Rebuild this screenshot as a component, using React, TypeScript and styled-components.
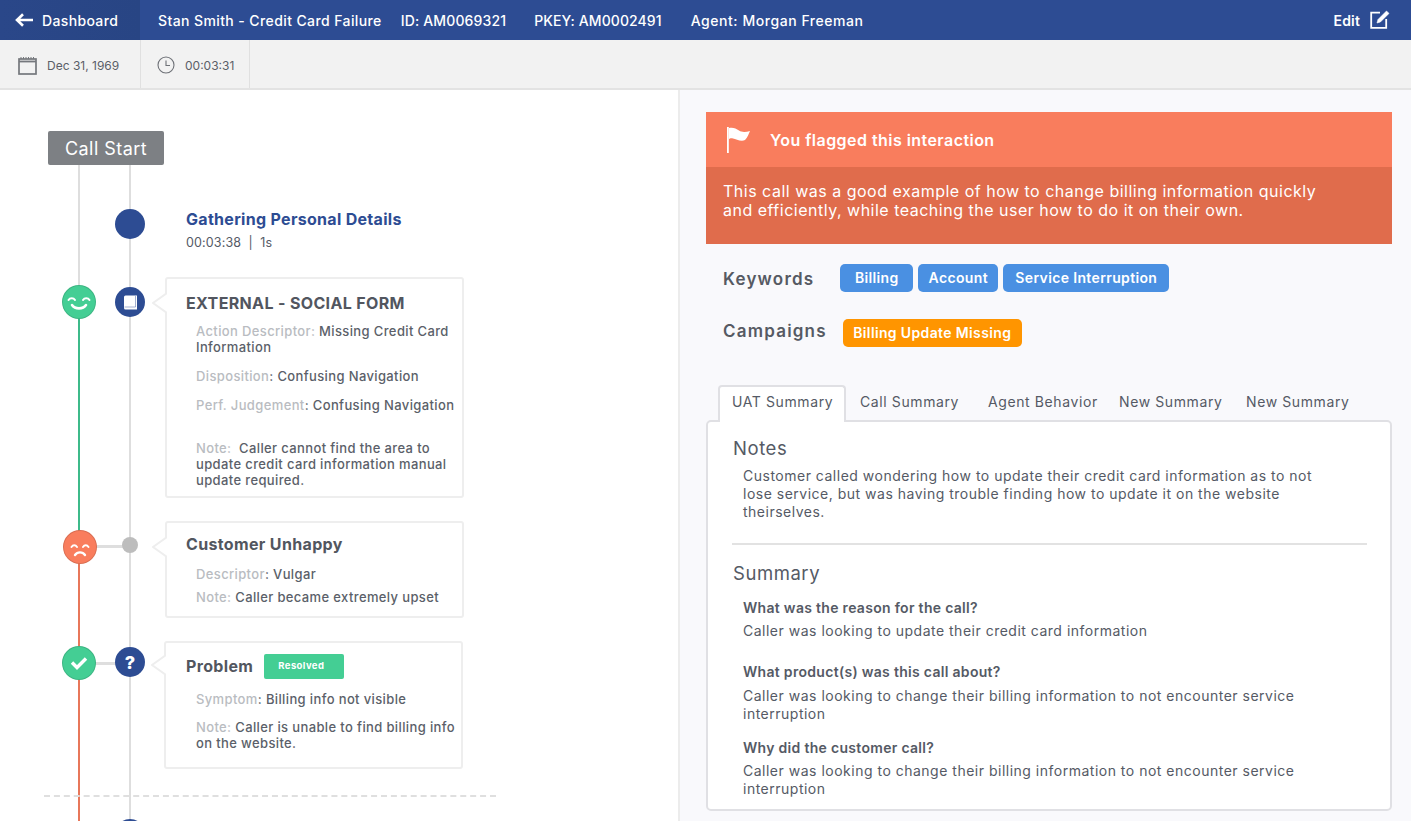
import React from 'react';
import styled, { createGlobalStyle } from 'styled-components';

const GlobalStyle = createGlobalStyle`
  html, body {
    margin: 0;
    padding: 0;
    height: 100%;
    overflow: hidden;
    background: #fff;
    font-family: Inter, "Open Sans", sans-serif;
    color: #555a66;
  }
  * { box-sizing: border-box; }
`;

const Page = styled.div`
  display: flex;
  flex-direction: column;
  height: 821px;
  overflow: hidden;
`;

/* top bar */
const TopBar = styled.header`
  display: flex;
  align-items: center;
  height: 40px;
  flex: none;
  background: #2d4c93;
  color: #fff;
  font-size: 14px;
  font-weight: 500;
`;

const BackLink = styled.a`
  display: flex;
  align-items: center;
  gap: 9px;
  width: 140px;
  height: 100%;
  padding-left: 15px;
  background: linear-gradient(to right, #2a4789, #284584);
  letter-spacing: 0.35px;
`;

const TopItem = styled.span<{ $left: number; $track: number }>`
  margin-left: ${(p) => p.$left}px;
  letter-spacing: ${(p) => p.$track}px;
  white-space: nowrap;
`;

const EditLink = styled.a`
  display: flex;
  align-items: center;
  gap: 10px;
  margin-left: auto;
  padding-right: 21px;
  font-weight: 600;
  letter-spacing: 0.15px;
`;

/* date bar */
const InfoBar = styled.div`
  display: flex;
  height: 50px;
  flex: none;
  background: #f2f2f2;
  border-bottom: 2px solid #e3e3e3;
`;

const InfoCell = styled.div<{ $width: number; $pad: number }>`
  display: flex;
  align-items: center;
  gap: 10px;
  width: ${(p) => p.$width}px;
  padding: 2px 0 0 ${(p) => p.$pad}px;
  border-right: 1px solid #e0e0e0;
  font-size: 12px;
  color: #5b5f68;
`;

const Columns = styled.div`
  display: grid;
  grid-template-columns: 680px 1fr;
  flex: 1;
  min-height: 0;
`;

/* timeline */
const LeftPane = styled.section`
  padding: 41px 0 0 48px;
  background: #fff;
  border-right: 2px solid #ececec;
  overflow: hidden;
`;

const StartLabel = styled.div`
  width: 116px;
  height: 34px;
  background: #7d8084;
  border-radius: 2px;
  color: #fff;
  font-size: 18px;
  line-height: 35px;
  letter-spacing: 0.45px;
  text-align: center;
`;

const Row = styled.div<{ $height: number }>`
  position: relative;
  display: grid;
  grid-template-columns: 62px 40px 1fr;
  height: ${(p) => p.$height}px;
`;

const Rail = styled.div<{ $top: string; $bottom?: string; $split?: number }>`
  display: flex;
  justify-content: center;
  align-items: flex-start;
  background-image: linear-gradient(
    to bottom,
    ${(p) => p.$top} 0,
    ${(p) => p.$top} ${(p) => p.$split ?? 0}px,
    ${(p) => p.$bottom ?? p.$top} ${(p) => p.$split ?? 0}px,
    ${(p) => p.$bottom ?? p.$top} 100%
  );
  background-size: 2px 100%;
  background-position: center;
  background-repeat: no-repeat;
`;

const Connector = styled.span<{ $top: number }>`
  position: absolute;
  left: 45px;
  top: ${(p) => p.$top}px;
  width: 40px;
  height: 3px;
  background: #dedede;
`;

const Mood = styled.div<{ $color: string; $offset: number; $shift?: number }>`
  position: relative;
  z-index: 1;
  display: flex;
  align-items: center;
  justify-content: center;
  width: 34px;
  height: 34px;
  margin-top: ${(p) => p.$offset}px;
  margin-left: ${(p) => p.$shift ?? 0}px;
  border-radius: 50%;
  background: ${(p) => p.$color};
  border: 1px solid rgba(0, 0, 0, 0.12);
`;

const Node = styled.div<{ $offset: number; $size?: number; $color?: string }>`
  position: relative;
  z-index: 1;
  display: flex;
  align-items: center;
  justify-content: center;
  width: ${(p) => p.$size ?? 30}px;
  height: ${(p) => p.$size ?? 30}px;
  margin-top: ${(p) => p.$offset}px;
  border-radius: 50%;
  background: ${(p) => p.$color ?? '#2d4c93'};
  color: #fff;
  font-size: 18px;
  font-weight: 800;
`;

const Plain = styled.div`
  padding: 45px 0 0 36px;
`;

const StepTitle = styled.div`
  color: #2d4c93;
  font-size: 16px;
  font-weight: 700;
  line-height: 18px;
  letter-spacing: 0.3px;
`;

const StepMeta = styled.div`
  margin-top: 7px;
  font-size: 12.5px;
  line-height: 16px;
  letter-spacing: 0.15px;
`;

const Card = styled.div<{ $height: number; $shift?: number; $pad?: number }>`
  position: relative;
  width: 299px;
  height: ${(p) => p.$height}px;
  margin-left: ${(p) => p.$shift ?? 15}px;
  padding: ${(p) => p.$pad ?? 15}px 4px 0 ${(p) => 34 - (p.$shift ?? 15)}px;
  background: #fff;
  border: 2px solid #eeeeee;
  border-radius: 3px;
`;

const Caret = styled.svg<{ $top: number }>`
  position: absolute;
  left: -15px;
  top: ${(p) => p.$top}px;
  width: 15px;
  height: 22px;
`;

const CardTitle = styled.div`
  display: flex;
  align-items: center;
  gap: 11px;
  height: 18px;
  font-size: 16px;
  font-weight: 700;
  line-height: 18px;
  letter-spacing: 0.35px;
  color: #52565f;
`;

const Detail = styled.p<{ $top: number }>`
  margin: ${(p) => p.$top}px 0 0 10px;
  font-size: 13px;
  font-weight: 500;
  line-height: 16px;
  letter-spacing: 0.37px;
  color: #5b5f69;
`;

const Muted = styled.span`
  color: #b9bcc1;
`;

const ResolvedTag = styled.span`
  flex: none;
  width: 80px;
  height: 25px;
  padding-left: 14px;
  background: #44ce94;
  border-radius: 2px;
  color: #fff;
  font-size: 9.5px;
  font-weight: 700;
  line-height: 24px;
  letter-spacing: 0.4px;
`;

const Dashed = styled.div`
  position: absolute;
  left: -4px;
  top: -1px;
  width: 452px;
  border-top: 2px dashed #dfdfdf;
`;

/* right side */
const RightPane = styled.section`
  padding: 22px 19px 0 26px;
  background: #f9f9fc;
  overflow: hidden;
`;

const AlertHead = styled.div`
  display: flex;
  align-items: center;
  gap: 19px;
  height: 55px;
  padding-left: 21px;
  background: #f97d5d;
  color: #fff;
  font-size: 16px;
  font-weight: 600;
  letter-spacing: 0.45px;
`;

const AlertBody = styled.div`
  height: 77px;
  padding: 15px 17px 0;
  background: #e06c4c;
  color: #fff;
  font-size: 16px;
  line-height: 19px;
  letter-spacing: 0.5px;
`;

const MetaRow = styled.div<{ $top: number }>`
  display: flex;
  align-items: center;
  margin-top: ${(p) => p.$top}px;
  padding-left: 17px;
`;

const MetaLabel = styled.span<{ $under?: number; $over?: number }>`
  margin: ${(p) => p.$over ?? 0}px 0 ${(p) => p.$under ?? 0}px;
  font-size: 17px;
  font-weight: 600;
  letter-spacing: 1.2px;
  color: #565a63;
`;

const Tags = styled.div<{ $left: number }>`
  display: flex;
  gap: 5px;
  margin-left: ${(p) => p.$left}px;
`;

const Tag = styled.span<{ $color: string; $width: number }>`
  width: ${(p) => p.$width}px;
  height: 28px;
  border-radius: 5px;
  background: ${(p) => p.$color};
  color: #fff;
  font-size: 14px;
  font-weight: 600;
  line-height: 27px;
  letter-spacing: 0.36px;
  text-align: center;
`;

const TabRow = styled.div`
  display: flex;
  height: 37px;
  margin-top: 38px;
  padding-left: 12px;
  position: relative;
  z-index: 1;
`;

const Tab = styled.span<{ $active?: boolean; $width: number }>`
  width: ${(p) => p.$width}px;
  padding-left: 12px;
  background: ${(p) => (p.$active ? '#fff' : 'transparent')};
  border: 2px solid ${(p) => (p.$active ? '#e0e0e4' : 'transparent')};
  border-bottom: none;
  border-radius: 4px 4px 0 0;
  font-size: 14px;
  line-height: 30px;
  letter-spacing: 0.6px;
  color: #555a65;
  white-space: nowrap;
`;

const Panel = styled.div`
  height: 391px;
  margin-top: -2px;
  padding: 15px 23px 0 25px;
  background: #fff;
  border: 2px solid #e0e0e4;
  border-radius: 5px;
`;

const PanelHeading = styled.h3`
  margin: 0;
  font-size: 18.5px;
  font-weight: 400;
  line-height: 22px;
  letter-spacing: 0.55px;
  color: #555a65;
`;

const PanelText = styled.p<{ $top: number }>`
  margin: ${(p) => p.$top}px 24px 0 10px;
  font-size: 14px;
  line-height: 18px;
  letter-spacing: 0.5px;
  color: #555a65;
`;

const Question = styled.p<{ $top: number }>`
  margin: ${(p) => p.$top}px 0 0 10px;
  font-size: 14px;
  font-weight: 600;
  line-height: 18px;
  letter-spacing: 0.3px;
  color: #555a65;
`;

const PanelRule = styled.hr`
  height: 2px;
  margin: 22px 0 17px -1px;
  border: none;
  background: #e2e2e2;
`;

const RAIL = '#dedede';
const GREEN = '#3dba8a';
const RED = '#e8775a';

function BackArrow() {
  return (
    <svg width="18" height="14" viewBox="0 0 18 14" fill="none" stroke="#fff" strokeWidth="2.6">
      <path d="M18 7H2.5M8 1.2 2 7l6 5.8" />
    </svg>
  );
}

function EditIcon() {
  return (
    <svg width="20" height="20" viewBox="0 0 20 20" fill="none" stroke="#fff">
      <path d="M10 2.6H1.2v15.2H16.2V9" strokeWidth="1.8" />
      <path d="M7 13 8 9.5 16.5 1 19 3.4 10.4 12Z" fill="#fff" strokeWidth="0.6" />
    </svg>
  );
}

function CalendarIcon() {
  return (
    <svg width="19" height="19" viewBox="0 0 19 19" fill="none" stroke="#75787d">
      <rect x="1" y="3" width="17" height="15" strokeWidth="1.7" />
      <path d="M1 5.5h17" strokeWidth="1.8" />
      <path d="M3 1v2M5.5 1v2M8 1v2M10.5 1v2M13 1v2M15.5 1v2" strokeWidth="1" />
    </svg>
  );
}

function ClockIcon() {
  return (
    <svg width="18" height="18" viewBox="0 0 18 18" fill="none" stroke="#6e7177" strokeWidth="1.1">
      <circle cx="9" cy="9" r="8" />
      <path d="M9 4.5V9.5H13" />
    </svg>
  );
}

function FlagIcon() {
  return (
    <svg width="24" height="26" viewBox="0 0 24 26" fill="#fff">
      <rect x="0" y="0" width="1.8" height="26" />
      <path d="M2 1C6 0 9 1.5 12 3.5S19 5 23 4C21.5 7 21 10 18 13 14 15 9 12 6 11.5S3 12 2 12Z" />
    </svg>
  );
}

function BookIcon() {
  return (
    <svg width="15" height="15" viewBox="0 0 15 15">
      <path d="M1 2A1.5 1.5 0 0 1 2.5.5H14v14H2.5A1.5 1.5 0 0 1 1 13Z" fill="#fff" />
      <path d="M1.5 12H12.5V1" fill="none" stroke="#2d4c93" strokeWidth="0.8" opacity="0.55" />
    </svg>
  );
}

function Smile() {
  return (
    <svg width="26" height="20" viewBox="0 0 26 20" fill="none" stroke="#fff" strokeWidth="2" strokeLinecap="round">
      <path d="M2.5 8c1.5-2.5 5-2.5 6.5 0M17 8c1.5-2.5 5-2.5 6.5 0" />
      <path d="M6 13c3 4.500 11 4.500 14 0" strokeWidth="2.6" />
    </svg>
  );
}

function Frown() {
  return (
    <svg width="24" height="20" viewBox="0 0 24 20" fill="none" stroke="#fff" strokeWidth="2" strokeLinecap="round">
      <path d="M3.5 10c1.500-2.200 4-2.200 5.500 0M15 10c1.500-2.200 4-2.200 5.500 0" />
      <path d="M7 18c2.500-3.500 7.500-3.500 10 0" strokeWidth="2.4" />
    </svg>
  );
}

function Check() {
  return (
    <svg width="18" height="14" viewBox="0 0 18 14" fill="none" stroke="#fff" strokeWidth="3.4">
      <path d="M2 6.5 7 11.5 16 2.5" />
    </svg>
  );
}

function CardCaret({ top }: { top: number }) {
  return (
    <Caret $top={top} viewBox="0 0 15 22">
      <path d="M15 1 1 11l14 10Z" fill="#fff" />
      <path d="M15 1 1 11l14 10" fill="none" stroke="#eeeeee" strokeWidth="2" />
    </Caret>
  );
}

export default function App() {
  return (
    <Page>
      <GlobalStyle />
      <TopBar>
        <BackLink>
          <BackArrow />
          Dashboard
        </BackLink>
        <TopItem $left={18} $track={0.4}>Stan Smith - Credit Card Failure</TopItem>
        <TopItem $left={19} $track={0.15}>ID: AM0069321</TopItem>
        <TopItem $left={28} $track={0.1}>PKEY: AM0002491</TopItem>
        <TopItem $left={29} $track={0.55}>Agent: Morgan Freeman</TopItem>
        <EditLink>
          Edit
          <EditIcon />
        </EditLink>
      </TopBar>

      <InfoBar>
        <InfoCell $width={141} $pad={18}>
          <CalendarIcon />
          Dec 31, 1969
        </InfoCell>
        <InfoCell $width={109} $pad={16}>
          <ClockIcon />
          00:03:31
        </InfoCell>
      </InfoBar>

      <Columns>
        <LeftPane>
          <StartLabel>Call Start</StartLabel>

          <Row $height={112}>
            <Rail $top={RAIL} />
            <Rail $top={RAIL}>
              <Node $offset={44} />
            </Rail>
            <Plain>
              <StepTitle>Gathering Personal Details</StepTitle>
              <StepMeta>00:03:38 &nbsp;|&nbsp; 1s</StepMeta>
            </Plain>
          </Row>

          <Row $height={244}>
            <Rail $top={RAIL} $bottom={GREEN} $split={25}>
              <Mood $color="#44ce94" $offset={8}>
                <Smile />
              </Mood>
            </Rail>
            <Rail $top={RAIL}>
              <Node $offset={10}>
                <BookIcon />
              </Node>
            </Rail>
            <div>
              <Card $height={221}>
                <CardCaret top={13} />
                <CardTitle>EXTERNAL - SOCIAL FORM</CardTitle>
                <Detail $top={11}>
                  <Muted>Action Descriptor:</Muted> Missing Credit Card Information
                </Detail>
                <Detail $top={13}>
                  <Muted>Disposition</Muted>: Confusing Navigation
                </Detail>
                <Detail $top={13}>
                  <Muted>Perf. Judgement</Muted>: Confusing Navigation
                </Detail>
                <Detail $top={27}>
                  <Muted>Note:</Muted>&nbsp; Caller cannot find the area to update credit card information manual
                  update required.
                </Detail>
              </Card>
            </div>
          </Row>

          <Row $height={120}>
            <Connector $top={24} />
            <Rail $top={GREEN} $bottom={RED} $split={12}>
              <Mood $color="#f97d5d" $offset={9} $shift={1}>
                <Frown />
              </Mood>
            </Rail>
            <Rail $top={RAIL}>
              <Node $offset={16} $size={16} $color="#bdbdbd" />
            </Rail>
            <div>
              <Card $height={97} $pad={12}>
                <CardCaret top={13} />
                <CardTitle>Customer Unhappy</CardTitle>
                <Detail $top={13}>
                  <Muted>Descriptor</Muted>: Vulgar
                </Detail>
                <Detail $top={7}>
                  <Muted>Note:</Muted> Caller became extremely upset
                </Detail>
              </Card>
            </div>
          </Row>

          <Row $height={155}>
            <Connector $top={21} />
            <Rail $top={RED}>
              <Mood $color="#44ce94" $offset={5}>
                <Check />
              </Mood>
            </Rail>
            <Rail $top={RAIL}>
              <Node $offset={6}>?</Node>
            </Rail>
            <div>
              <Card $height={128} $shift={14} $pad={14}>
                <CardCaret top={11} />
                <CardTitle>
                  Problem
                  <ResolvedTag>Resolved</ResolvedTag>
                </CardTitle>
                <Detail $top={16}>
                  <Muted>Symptom</Muted>: Billing info not visible
                </Detail>
                <Detail $top={12}>
                  <Muted>Note:</Muted> Caller is unable to find billing info on the website.
                </Detail>
              </Card>
            </div>
          </Row>

          <Row $height={60}>
            <Dashed />
            <Rail $top={RED} />
            <Rail $top={RAIL}>
              <Node $offset={23} />
            </Rail>
          </Row>
        </LeftPane>

        <RightPane>
          <AlertHead>
            <FlagIcon />
            You flagged this interaction
          </AlertHead>
          <AlertBody>
            This call was a good example of how to change billing information quickly
            <br />
            and efficiently, while teaching the user how to do it on their own.
          </AlertBody>

          <MetaRow $top={20}>
            <MetaLabel $over={2}>Keywords</MetaLabel>
            <Tags $left={26}>
              <Tag $color="#4a90e2" $width={73}>Billing</Tag>
              <Tag $color="#4a90e2" $width={80}>Account</Tag>
              <Tag $color="#4a90e2" $width={166}>Service Interruption</Tag>
            </Tags>
          </MetaRow>
          <MetaRow $top={27}>
            <MetaLabel $under={4}>Campaigns</MetaLabel>
            <Tags $left={16}>
              <Tag $color="#ff9500" $width={179}>Billing Update Missing</Tag>
            </Tags>
          </MetaRow>

          <TabRow>
            <Tab $active $width={128}>UAT Summary</Tab>
            <Tab $width={128}>Call Summary</Tab>
            <Tab $width={131}>Agent Behavior</Tab>
            <Tab $width={127}>New Summary</Tab>
            <Tab $width={127}>New Summary</Tab>
          </TabRow>

          <Panel>
            <PanelHeading>Notes</PanelHeading>
            <PanelText $top={8}>
              Customer called wondering how to update their credit card information as to not lose service, but was
              having trouble finding how to update it on the website theirselves.
            </PanelText>
            <PanelRule />
            <PanelHeading>Summary</PanelHeading>
            <Question $top={15}>What was the reason for the call?</Question>
            <PanelText $top={5}>Caller was looking to update their credit card information</PanelText>
            <Question $top={23}>What product(s) was this call about?</Question>
            <PanelText $top={6}>
              Caller was looking to change their billing information to not encounter service interruption
            </PanelText>
            <Question $top={16}>Why did the customer call?</Question>
            <PanelText $top={5}>
              Caller was looking to change their billing information to not encounter service interruption
            </PanelText>
          </Panel>
        </RightPane>
      </Columns>
    </Page>
  );
}
